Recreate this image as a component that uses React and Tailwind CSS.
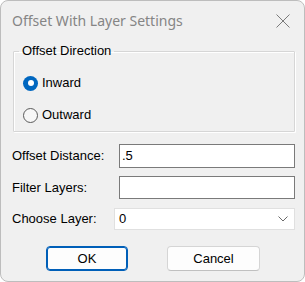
import React from "react";

function Radio({ checked, label }) {
  return (
    <div className="flex items-center h-[16px]">
      {checked ? (
        <span className="w-[15px] h-[15px] rounded-full bg-[#0067c0] flex items-center justify-center">
          <span className="w-[6px] h-[6px] rounded-full bg-white" />
        </span>
      ) : (
        <span className="w-[15px] h-[15px] rounded-full border border-[#5a5a5a] bg-[#f7f7f7]" />
      )}
      <span className="ml-[4px] leading-[16px]">{label}</span>
    </div>
  );
}

export default function App() {
  return (
    <div
      className="w-[305px] h-[282px] bg-[#f0f0f0] border border-[#bdbdbd] rounded-[8px] text-[13px] text-black overflow-hidden"
      style={{ fontFamily: '"Liberation Sans", Arial, sans-serif' }}
    >
      <div className="h-[38px] flex items-center justify-between pl-[11px] pr-[14px]">
        <span
          className="text-[14px] text-[#858585]"
          style={{ fontFamily: '"Noto Sans", "Open Sans", sans-serif' }}
        >
          Offset With Layer Settings
        </span>
        <svg width="14" height="14" viewBox="0 0 14 14" className="mt-[1px]">
          <path d="M0.5 0.5 L13.5 13.5 M13.5 0.5 L0.5 13.5" stroke="#7a7a7a" strokeWidth="1" fill="none" />
        </svg>
      </div>

      <fieldset className="mt-[4px] ml-[12px] mr-[9px] border border-[#d6d6d6] rounded-[1px] shadow-[inset_1px_1px_0_#ffffff,1px_1px_0_#ffffff] pb-[8px]">
        <legend className="ml-[5px] px-[3px] leading-[16px]">Offset Direction</legend>
        <div className="flex flex-col gap-[16px] pt-[16px] pl-[9px]">
          <Radio checked label="Inward" />
          <Radio label="Outward" />
        </div>
      </fieldset>

      <div className="pl-[11px] pr-[9px] mt-[12px] flex flex-col">
        <div className="flex items-center justify-between h-[24px]">
          <span>Offset Distance:</span>
          <div className="w-[176px] h-[24px] border border-[#7a7a7a] bg-white flex items-center pl-[2px]">.5</div>
        </div>
        <div className="flex items-center justify-between h-[23px] mt-[8px]">
          <span>Filter Layers:</span>
          <div className="w-[176px] h-[23px] border border-[#7a7a7a] bg-white" />
        </div>
        <div className="flex items-center justify-between h-[22px] mt-[9px]">
          <span>Choose Layer:</span>
          <div className="w-[181px] h-[22px] border border-[#e0e0e0] bg-white flex items-center justify-between pl-[4px] pr-[6px]">
            <span>0</span>
            <svg width="10" height="6" viewBox="0 0 10 6">
              <path d="M0.5 0.5 L5 5 L9.5 0.5" stroke="#6a6a6a" strokeWidth="1" fill="none" />
            </svg>
          </div>
        </div>
      </div>

      <div className="flex pl-[45px] mt-[16px] gap-[39px]">
        <button className="w-[82px] h-[25px] rounded-[4px] border border-[#005fb8] bg-[#fdfdfd] shadow-[inset_0_0_0_1px_#005fb8] text-[13px]">
          OK
        </button>
        <button className="w-[93px] h-[25px] rounded-[4px] border border-[#d5d5d5] border-b-[#c0c0c0] bg-[#fdfdfd] text-[13px]">
          Cancel
        </button>
      </div>
    </div>
  );
}
